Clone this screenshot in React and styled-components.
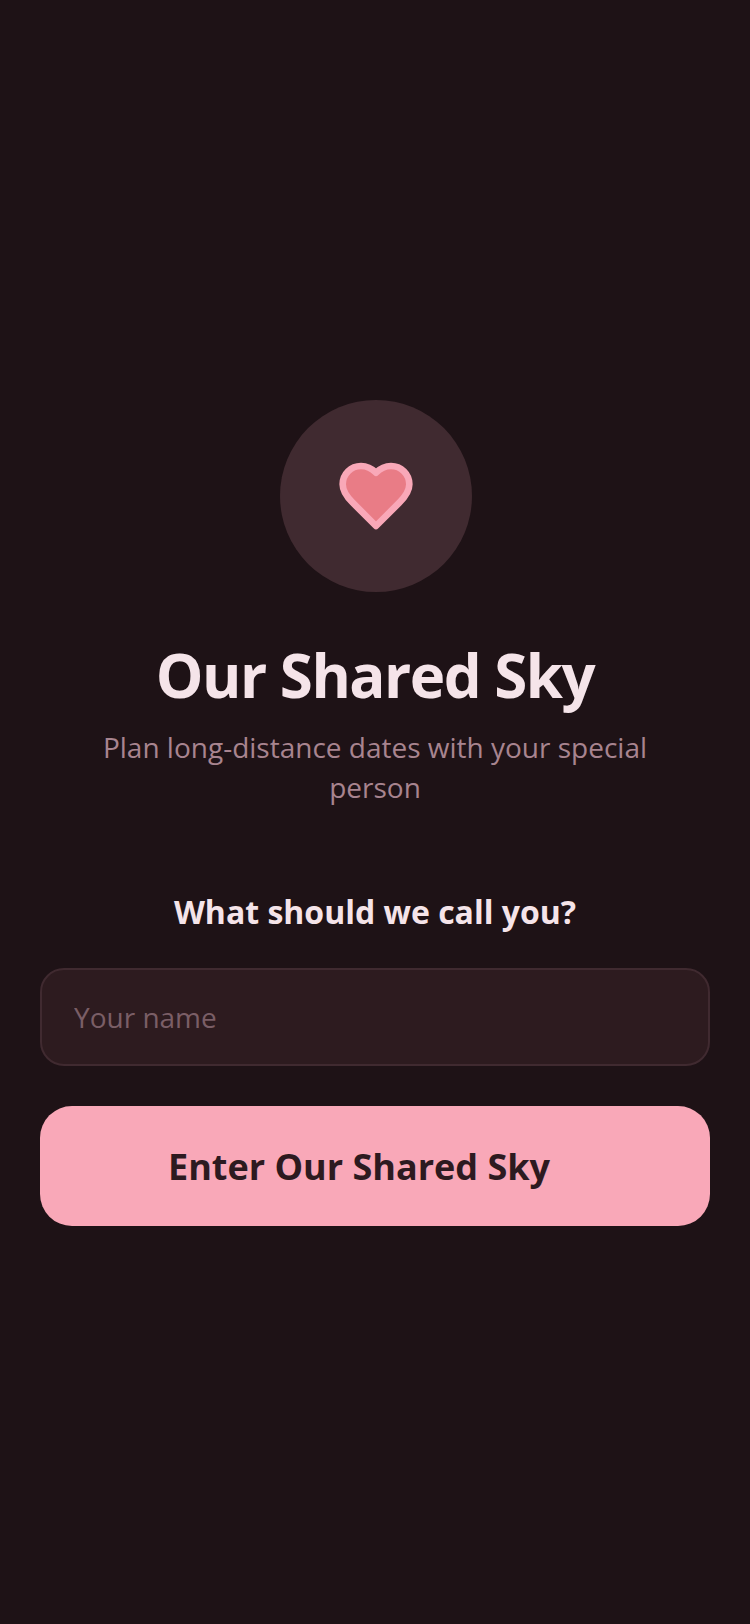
import styled, { createGlobalStyle } from "styled-components";

const GlobalStyle = createGlobalStyle`
  html, body {
    margin: 0;
    padding: 0;
    background: #1e1216;
  }
  * {
    box-sizing: border-box;
  }
`;

const Page = styled.main`
  min-height: 1624px;
  padding: 2px 40px 0;
  display: flex;
  flex-direction: column;
  align-items: center;
  justify-content: center;
  background: #1e1216;
  font-family: "Open Sans", sans-serif;
`;

const LogoCircle = styled.div`
  width: 192px;
  height: 192px;
  border-radius: 50%;
  background: #402a30;
  display: flex;
  align-items: center;
  justify-content: center;
  margin: 0 0 49px 2px;
`;

const Title = styled.h1`
  margin: 0 0 18px;
  font-size: 60px;
  line-height: 68px;
  font-weight: 700;
  letter-spacing: -0.025em;
  color: #f5e4e9;
  text-align: center;
`;

const Subtitle = styled.p`
  max-width: 590px;
  margin: 0 0 83px;
  font-size: 28px;
  line-height: 40px;
  font-weight: 400;
  color: #a8848f;
  text-align: center;
`;

const Label = styled.label`
  margin-bottom: 34px;
  font-size: 32px;
  line-height: 44px;
  font-weight: 700;
  color: #f5e4e9;
  text-align: center;
`;

const NameInput = styled.input`
  width: 100%;
  height: 98px;
  padding: 0 32px;
  margin-bottom: 40px;
  border: 2px solid #402a30;
  border-radius: 24px;
  background: #2d1b1f;
  font-family: inherit;
  font-size: 28px;
  color: #f5e4e9;
  outline: none;

  &::placeholder {
    color: #7a5e66;
    opacity: 1;
  }
`;

const EnterButton = styled.button`
  width: 100%;
  height: 120px;
  border: none;
  border-radius: 32px;
  background: #f9a8b8;
  display: flex;
  align-items: center;
  justify-content: center;
  gap: 16px;
  font-family: inherit;
  font-size: 36px;
  font-weight: 700;
  color: #2d1a20;
`;

const ButtonIconSlot = styled.span`
  width: 16px;
  height: 36px;
`;

const HeartIcon = () => (
  <svg width="80" height="80" viewBox="0 0 24 24" fill="#e97c86" stroke="#f9a8b8" strokeWidth="2" strokeLinecap="round" strokeLinejoin="round">
    <path d="M19 14c1.49-1.46 3-3.21 3-5.5A5.5 5.5 0 0 0 16.5 3c-1.76 0-3 .5-4.5 2-1.5-1.5-2.74-2-4.5-2A5.5 5.5 0 0 0 2 8.5c0 2.3 1.5 4.05 3 5.5l7 7Z" />
  </svg>
);

const App = () => {
  return (
    <>
      <GlobalStyle />
      <Page>
        <LogoCircle>
          <HeartIcon />
        </LogoCircle>
        <Title>Our Shared Sky</Title>
        <Subtitle>Plan long-distance dates with your special person</Subtitle>
        <Label htmlFor="name">What should we call you?</Label>
        <NameInput id="name" placeholder="Your name" />
        <EnterButton>
          Enter Our Shared Sky
          <ButtonIconSlot />
        </EnterButton>
      </Page>
    </>
  );
};

export default App;
